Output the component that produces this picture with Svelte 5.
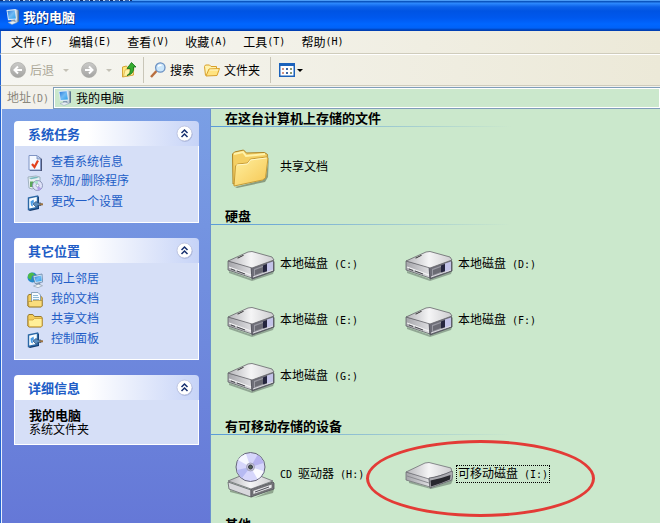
<script lang="ts">
type Item = { label: string; icon: string; selected?: boolean };
type Group = { title: string; items: Item[] };

const menus = ["文件(F)", "编辑(E)", "查看(V)", "收藏(A)", "工具(T)", "帮助(H)"];

const panels = [
	{
		title: "系统任务",
		links: [
			{ label: "查看系统信息", icon: "info" },
			{ label: "添加/删除程序", icon: "programs" },
			{ label: "更改一个设置", icon: "settings" },
		],
	},
	{
		title: "其它位置",
		links: [
			{ label: "网上邻居", icon: "network" },
			{ label: "我的文档", icon: "documents" },
			{ label: "共享文档", icon: "shared" },
			{ label: "控制面板", icon: "settings" },
		],
	},
];

const groups: Group[] = [
	{
		title: "在这台计算机上存储的文件",
		items: [{ label: "共享文档", icon: "folder" }],
	},
	{
		title: "硬盘",
		items: ["C", "D", "E", "F", "G"].map((letter) => ({
			label: `本地磁盘 (${letter}:)`,
			icon: "disk",
		})),
	},
	{
		title: "有可移动存储的设备",
		items: [
			{ label: "CD 驱动器 (H:)", icon: "cd" },
			{ label: "可移动磁盘 (I:)", icon: "removable", selected: true },
		],
	},
	{ title: "其他", items: [] },
];

let address = $state("我的电脑");
let closed = $state<Record<string, boolean>>({});

function toggle(title: string) {
	closed[title] = !closed[title];
}

// splits a label into CJK and ASCII runs, odd entries are ASCII
function runs(text: string) {
	return text.split(/([ -~]+)/);
}
</script>

{#snippet mixed(text: string)}
  {#each runs(text) as run, i}{#if i % 2}<span class="latin">{run}</span>{:else}{run}{/if}{/each}
{/snippet}

{#snippet computer()}
  <svg width="16" height="16" viewBox="0 0 16 16" aria-hidden="true">
    <path d="M10 0l3 1v12l-3 1z" fill="#c3ced8" />
    <path d="M12.5 1L14 1.5v11l-1.5 1z" fill="#5c7590" />
    <path d="M1.5 1L10.500 0l1.500 10.500-9 .8z" fill="#dceaf6" />
    <path d="M2.500 2L9.700 1.200l1.200 8.200-7.200.6z" fill="url(#screen)" />
    <path d="M6 11h4l.5 2H6.500z" fill="#8296ad" />
    <path d="M3 13.500l5-1.500 4 1.500-5 2z" fill="#e6edf2" stroke="#8ea2b8" stroke-width=".5" />
  </svg>
{/snippet}

{#snippet smallFolder()}
  <svg width="16" height="16" viewBox="0 0 16 16" aria-hidden="true">
    <path d="M1.500 13.500l-1-9 1-1.500h4l1.500 1.500h5.500v3" fill="#fff3ad" stroke="#d9a02b" />
    <path d="M2 14l3-7 10.500-.5-2.500 7z" fill="#ffe380" stroke="#d9a02b" />
    <path d="M5.700 8h8.500" stroke="#fff8cc" />
  </svg>
{/snippet}

{#snippet chevrons()}
  <svg width="17" height="17" viewBox="0 0 17 17" aria-hidden="true">
    <circle cx="9" cy="9.3" r="7.5" fill="#8a97c4" opacity=".6" />
    <circle cx="8.5" cy="8.5" r="7.5" fill="#fff" stroke="#b5bddb" stroke-width=".8" />
    <path d="M5.500 8L8.500 5l3 3M5.500 12l3-3 3 3" fill="none" stroke="#17306f" stroke-width="1.500" />
  </svg>
{/snippet}

{#snippet taskIcon(name: string)}
  <svg class="task-icon" width="16" height="16" viewBox="0 0 16 16" aria-hidden="true">
    {#if name === "info"}
      <path d="M3 1h8l4 3v12H3z" fill="#4a5578" />
      <path d="M2 .5h8l3.500 3.500v11H2z" fill="#f4f8ff" stroke="#7f94c4" />
      <path d="M10 .5v3.500h3.500" fill="#bfd0f0" stroke="#6d83b4" stroke-width=".8" />
      <path d="M5 9l2.500 3L11 5.500" fill="none" stroke="#e2401c" stroke-width="2.200" />
    {:else if name === "programs"}
      <path d="M1 2l8-1 4 1v9l-8 3-3-1z" fill="#e8eff2" stroke="#8fa5b2" stroke-width=".8" />
      <path d="M2 3l7-1.200 3 1-8 1.500z" fill="#73b7bd" />
      <path d="M3 6.500h3.500V12H3z" fill="#5da75b" />
      <circle cx="10.500" cy="10.500" r="5" fill="#dfe3f8" stroke="#7c86ab" stroke-width=".8" />
      <path d="M10.500 10.500L7 7a5 5 0 0 1 4-1z" fill="#a9e2c9" />
      <path d="M10.500 10.500l4 3a5 5 0 0 1-4 2z" fill="#b3a1eb" />
      <circle cx="10.500" cy="10.500" r="1.500" fill="#fff" stroke="#8893b7" stroke-width=".7" />
    {:else if name === "settings"}
      <path d="M2 3l9-2 1 1v12l-9 2-2-1z" fill="#143c70" />
      <path d="M1.500 3l9-2v11.500l-9 2z" fill="#f7fcff" stroke="#2b68a6" stroke-width="1.400" />
      <path d="M3.500 6.500l3-2 .500 3-1.500 1 .5 3-2-1z" fill="#4a9be4" />
      <path d="M6 9l3-2.500 2 1.500h3v2.500h-3L9 12z" fill="#5d8dbd" stroke="#264b72" stroke-width=".7" />
      <path d="M12.500 9.300H16" stroke="#9d7443" stroke-width="2" />
    {:else if name === "network"}
      <circle cx="5.500" cy="5.500" r="5" fill="#268aca" />
      <path d="M1 4c0-2 2-4 5-3l2 2-3 1-1 4-3-2z" fill="#4cba49" />
      <path d="M6 4l9-2 .7 8L8 11.500z" fill="#e0edf7" stroke="#56779c" stroke-width=".7" />
      <path d="M7.300 5l7-1.600.4 5.600-6 1z" fill="url(#screen)" />
      <path d="M9 11.500l4-.8.500 2H9z" fill="#7992ad" />
      <path d="M6.500 14l5-1.800 4 1.500-4.500 2z" fill="#f0f3f5" stroke="#8596a7" stroke-width=".6" />
    {:else}
      <path d="M.8 14V4l1-1.500h4L7.500 4.500H14l1.200 1V14l-1 1H2z" fill="#f4cd5c" stroke="#8f6f22" stroke-width=".9" />
      {#if name === "documents"}
        <path d="M4.500.5H11l2.500 2.500v8h-9z" fill="#f7fbff" stroke="#7592ad" stroke-width=".8" />
        <path d="M6 3.500h5M6 5.500h6M6 7.500h6" stroke="#73aaca" stroke-width=".8" />
        <path d="M1.300 9.500H5l1-1h9V14l-1 .7H2z" fill="#fbdd7c" stroke="#a58128" stroke-width=".6" />
      {:else}
        <path d="M1.300 8H6l1.500-1.500H15V14l-1 .7H2z" fill="#ffef99" stroke="#ca9b31" stroke-width=".7" />
      {/if}
    {/if}
  </svg>
{/snippet}

{#snippet bigIcon(name: string)}
  <svg width="48" height="48" viewBox="0 0 48 48" aria-hidden="true">
    {#if name === "folder"}
      <path d="M8 45l28-7 3-4 3-21-1 22-3 5-28 6z" fill="#5f6a4c" opacity=".6" />
      <path d="M6 42l-.5-30 2-2 9-2 3 3 18-.5 3 2-3 23z" fill="#f4cf63" stroke="#ad8528" />
      <path d="M7 12l9-2 3 4 19-2" fill="none" stroke="#fff3aa" stroke-width="2" />
      <path d="M7 44L8.500 24l2-2 10-1 3-4 16-2 1.500 1-2.500 20-3 2z" fill="url(#folder-face)" stroke="#c69a34" />
      <path d="M9.500 23l11-1 3-4 16-2" fill="none" stroke="#fff8c8" />
    {:else if name === "disk"}
      <path d="M2 31l23 8 22-8-1 3-21 7L2 33z" fill="#58665b" opacity=".5" />
      <path d="M1 21l24 6v11L1 30z" fill="url(#drive-side)" stroke="#626269" stroke-width=".8" />
      <path d="M24 27l22-7 1 2v9l-22 8z" fill="#6e6e78" stroke="#4a4a54" stroke-width=".8" />
      <path d="M1 21l20-9 4-.5L45 17l2 3-22 8z" fill="url(#drive-top)" stroke="#66666b" stroke-width=".8" />
      <path d="M10 18l6-3 1 .5-6 3z" fill="#333" />
      <path d="M2 27l22 8" stroke="#f4f4f5" stroke-width="1.200" />
      <path d="M4 29l4 1.500M10 31l8 3" stroke="#47474d" />
      <path d="M27 29l10-3.500V33l-10 3.500z" fill="#9a9aa3" />
      <path d="M28 30l8-3v5l-8 3z" fill="#6b6b74" />
      <path d="M36 25.500l4-1.500v7l-4 1.500z" fill="#25253e" />
      <path d="M40 23.500l6-2v9l-6 2z" fill="#c3c3e8" />
      <path d="M26 37l20-7" stroke="#dfdfe3" />
    {:else if name === "cd"}
      <path d="M3 40l24 8 20-9-1 4-19 5L3 42z" fill="#53624f" opacity=".5" />
      <path d="M1 32l23 8v7L2 39z" fill="#d8d8dc" stroke="#606066" stroke-width=".8" />
      <path d="M24 39l22-7 1 1v6l-23 8z" fill="#78787f" stroke="#505055" stroke-width=".8" />
      <path d="M1 31l17-7h10l18 7-22 8z" fill="url(#drive-top)" stroke="#6a6a70" stroke-width=".8" />
      <path d="M26 40.500l19-6.500v4l-19 6.500z" fill="#e8e8ec" stroke="#555" stroke-width=".6" />
      <path d="M28 42l14-5" stroke="#505058" />
      <circle cx="23.500" cy="17" r="14.500" fill="#d6d6fb" stroke="#66667a" />
      <path d="M23.500 17L11 10a14 14 0 0 1 8-6z" fill="#f5f7ff" />
      <path d="M23.500 17L10 20a14 14 0 0 0 5 8z" fill="#b6baf2" />
      <path d="M23.500 17l7-12a14 14 0 0 1 6 8z" fill="#b8b4f0" />
      <path d="M23.500 17l13 4a14 14 0 0 1-6 8z" fill="#fafaff" />
      <circle cx="23.500" cy="17" r="4" fill="#c5c5da" stroke="#9494ac" stroke-width=".7" />
      <circle cx="23.500" cy="17" r="2" fill="#526251" stroke="#39394a" />
    {:else}
      <path d="M4 31l22 7 22-8-2 4-20 5L4 33z" fill="#58665b" opacity=".5" />
      <path d="M1 22l23 6 1 9L1 30z" fill="url(#drive-side)" stroke="#707076" stroke-width=".8" />
      <path d="M1 22l19-9 4-.5L46 18l1 4-23 7z" fill="url(#drive-top)" stroke="#707076" stroke-width=".8" />
      <path d="M24 28q10-1 23-7l1 2-1 7-22 8z" fill="#aaaab0" stroke="#5a5a62" stroke-width=".8" />
      <path d="M25.500 30.500q9-1.500 20-5.500l-.5 4.500q-9 4-19 7z" fill="#28282e" />
      <path d="M2 26l22 7" stroke="#8b8b91" />
    {/if}
  </svg>
{/snippet}

<svg class="defs" width="0" height="0" aria-hidden="true">
  <defs>
    <linearGradient id="screen" x1="0" y1="0" x2="1" y2="1">
      <stop offset="0" stop-color="#2878da" />
      <stop offset=".5" stop-color="#71baf4" />
      <stop offset="1" stop-color="#2aa0eb" />
    </linearGradient>
    <linearGradient id="folder-face" x1="0" y1="0" x2="1" y2="1">
      <stop offset="0" stop-color="#fff0a0" />
      <stop offset="1" stop-color="#f6c753" />
    </linearGradient>
    <linearGradient id="drive-top" x1="0" y1="0" x2="1" y2="0">
      <stop offset="0" stop-color="#b5b5b9" />
      <stop offset=".5" stop-color="#f5f5f6" />
      <stop offset="1" stop-color="#cdcdd0" />
    </linearGradient>
    <linearGradient id="drive-side" x1="0" y1="0" x2="1" y2="0">
      <stop offset="0" stop-color="#a5a5aa" />
      <stop offset="1" stop-color="#dfdfe2" />
    </linearGradient>
    <linearGradient id="round-grey" x1="0" y1="0" x2="0" y2="1">
      <stop offset="0" stop-color="#cbcbc9" />
      <stop offset="1" stop-color="#a3a3a1" />
    </linearGradient>
  </defs>
</svg>

<div class="window">
  <header class="title-bar">
    {@render computer()}
    <h1>我的电脑</h1>
  </header>

  <nav class="menu-bar">
    {#each menus as menu}
      <button type="button">{@render mixed(menu)}</button>
    {/each}
  </nav>

  <div class="toolbar">
    <button type="button" class="tool back" disabled>
      <svg width="16" height="16" viewBox="0 0 16 16" aria-hidden="true">
        <circle cx="8" cy="8" r="7.5" fill="url(#round-grey)" stroke="#aaaaa6" stroke-width=".7" />
        <path d="M12 8H5M8 4.500L4.500 8 8 11.500" fill="none" stroke="#fff" stroke-width="2" />
      </svg>
      后退
    </button>
    <span class="arrow pale"></span>
    <button type="button" class="tool forward" aria-label="前进" disabled>
      <svg width="16" height="16" viewBox="0 0 16 16" aria-hidden="true">
        <circle cx="8" cy="8" r="7.5" fill="url(#round-grey)" stroke="#aaaaa6" stroke-width=".7" />
        <path d="M4 8h7M8 4.500l3.500 3.500L8 11.500" fill="none" stroke="#fff" stroke-width="2" />
      </svg>
    </button>
    <span class="arrow pale"></span>
    <button type="button" class="tool up" aria-label="向上">
      <svg width="16" height="16" viewBox="0 0 16 16" aria-hidden="true">
        <path d="M1.500 15V5l4-1 1 1.500 6-1V13z" fill="#ffe67b" stroke="#d6a437" />
        <path d="M2.500 14.500L4 8l9-2-1 7z" fill="#fff3a5" stroke="#d2a33c" stroke-width=".6" />
        <path d="M6 13.500q4-2 3-7H6L10.500.5 15 5h-2.500q1 7-6.500 8.500z" fill="#35ad2f" stroke="#136f17" stroke-width=".8" />
      </svg>
    </button>
    <span class="separator"></span>
    <button type="button" class="tool">
      <svg width="16" height="16" viewBox="0 0 16 16" aria-hidden="true">
        <path d="M1 15l5.500-6" stroke="#b86e3e" stroke-width="2.5" />
        <circle cx="10.3" cy="5.5" r="4.7" fill="#cce7fb" stroke="#6b91c2" stroke-width="1.3" />
        <path d="M8 4.500q1.500-2 3.500-1" fill="none" stroke="#fff" stroke-width="1.5" />
      </svg>
      搜索
    </button>
    <button type="button" class="tool folders">
      {@render smallFolder()}
      文件夹
    </button>
    <span class="separator"></span>
    <button type="button" class="tool views" aria-label="查看">
      <svg width="16" height="16" viewBox="0 0 16 16" aria-hidden="true">
        <rect x=".75" y="1.75" width="14.5" height="12.5" fill="#fff" stroke="#1b62bb" stroke-width="1.5" />
        <path d="M0 2.500h16" stroke="#1b62bb" stroke-width="3" />
        <path d="M3 7h2M3 11h2" stroke="#d29586" stroke-width="2" />
        <path d="M7 7h2M7 11h2" stroke="#3b67a5" stroke-width="2" />
        <path d="M11 7h2M11 11h2" stroke="#8b9a78" stroke-width="2" />
      </svg>
      <span class="arrow"></span>
    </button>
  </div>

  <div class="address-bar">
    <label for="address">{@render mixed("地址(D)")}</label>
    <div class="address-field">
      {@render computer()}
      <input id="address" type="text" bind:value={address} />
    </div>
  </div>

  <div class="content">
    <aside>
      {#each panels as panel}
        <section class="panel">
          <div class="panel-head">
            <h2>{panel.title}</h2>
            <button type="button" aria-label={panel.title} onclick={() => toggle(panel.title)}>
              {@render chevrons()}
            </button>
          </div>
          {#if !closed[panel.title]}
            <ul class="panel-body">
              {#each panel.links as link}
                <li>
                  <a href="#{link.icon}">
                    {@render taskIcon(link.icon)}
                    <span>{@render mixed(link.label)}</span>
                  </a>
                </li>
              {/each}
            </ul>
          {/if}
        </section>
      {/each}

      <section class="panel">
        <div class="panel-head">
          <h2>详细信息</h2>
          <button type="button" aria-label="详细信息" onclick={() => toggle("详细信息")}>
            {@render chevrons()}
          </button>
        </div>
        {#if !closed["详细信息"]}
          <div class="panel-body details">
            <strong>我的电脑</strong>
            <p>系统文件夹</p>
          </div>
        {/if}
      </section>
    </aside>

    <main>
      {#each groups as group}
        <section class="group">
          <h2>{group.title}</h2>
          <div class="items">
            {#each group.items as item}
              <button type="button" class="item" class:selected={item.selected}>
                {@render bigIcon(item.icon)}
                <span class="name">{@render mixed(item.label)}</span>
                {#if item.selected}
                  <span class="ring"></span>
                {/if}
              </button>
            {/each}
          </div>
        </section>
      {/each}
    </main>
  </div>
</div>

<style>
  :global(body) {
    margin: 0;
    overflow: hidden;
  }

  .defs {
    position: absolute;
  }

  .window {
    display: flex;
    flex-direction: column;
    height: 100vh;
    overflow: hidden;
    font-family: "Noto Sans CJK SC", sans-serif;
    font-size: 12px;
    line-height: 16px;
    color: #000;
    background: #cbe8cc;
  }

  svg {
    display: block;
    flex: none;
  }

  h1,
  h2,
  p,
  ul {
    margin: 0;
    padding: 0;
  }

  button {
    margin: 0;
    padding: 0;
    border: 0;
    background: none;
    font: inherit;
    color: inherit;
    white-space: nowrap;
  }

  .latin {
    font-family: "DejaVu Sans Mono", monospace;
    font-size: 10px;
    white-space: pre;
  }

  .title-bar {
    display: flex;
    align-items: center;
    gap: 2px;
    box-sizing: border-box;
    height: 31px;
    padding: 2px 5px 0;
    background:
      repeating-linear-gradient(90deg, #14316f 0 3px, #b9d4f2 3px 5px, #3265b0 5px 9px, #dce9f7 9px 10px)
        0 0 / 132px 1px no-repeat,
      linear-gradient(
        #4a9bf5 0 1px,
        #0a55c0 1px 2px,
        #2f8cff 3px,
        #0a60e8 7px,
        #0054e3 11px,
        #0058ee 18px,
        #0066ff 24px,
        #0062f8 28px,
        #003fb4 30px
      );
  }

  .title-bar h1 {
    font-size: 13px;
    line-height: 16px;
    color: #fff;
    text-shadow: 1px 1px #0b2f80;
  }

  .menu-bar {
    display: flex;
    align-items: center;
    gap: 16px;
    box-sizing: border-box;
    height: 23px;
    padding-left: 10px;
    border-left: 1px solid #2565d0;
    border-bottom: 1px solid #cfccbc;
    background: linear-gradient(90deg, #f7f7f4, #ece9d8);
  }

  .menu-bar button,
  .tool {
    display: flex;
    align-items: center;
  }

  .toolbar {
    display: flex;
    align-items: center;
    box-sizing: border-box;
    height: 32px;
    padding-left: 9px;
    border-left: 1px solid #2565d0;
    border-top: 1px solid #fff;
    border-bottom: 1px solid #cfccbc;
    background: linear-gradient(90deg, #f6f6f2, #ece9d8);
  }

  .tool {
    gap: 4px;
  }

  .back {
    color: #aca899;
  }

  .back,
  .forward {
    margin-right: 9px;
  }

  .forward {
    margin-left: 12px;
  }

  .up {
    margin: 0 6px 0 9px;
  }

  .arrow {
    border: 3px solid transparent;
    border-top-color: #000;
    border-bottom: 0;
  }

  .pale {
    border-top-color: #c4c1b6;
  }

  .separator {
    width: 1px;
    height: 26px;
    margin-right: 6px;
    background: #c9c6b8;
  }

  .folders {
    margin: 0 10px;
  }

  .views {
    gap: 2px;
    margin-left: 2px;
  }

  .address-bar {
    display: flex;
    align-items: center;
    box-sizing: border-box;
    height: 23px;
    padding-top: 1px;
    border-left: 1px solid #2565d0;
    background: #f2f1eb;
  }

  .address-bar label {
    width: 46px;
    padding-left: 6px;
    color: #8a877c;
    white-space: nowrap;
  }

  .address-field {
    display: flex;
    flex: 1;
    align-items: center;
    gap: 3px;
    box-sizing: border-box;
    height: 22px;
    padding-left: 3px;
    border: 1px solid #7f9db9;
    border-right: 0;
    background: #cbe8cc;
    box-shadow: inset 0 0 0 1px #fff;
  }

  .address-field input {
    flex: 1;
    min-width: 0;
    padding: 0;
    border: 0;
    background: none;
    font: inherit;
    color: inherit;
    outline: none;
  }

  .content {
    display: flex;
    flex: 1;
    min-height: 0;
  }

  aside {
    flex: none;
    display: flex;
    flex-direction: column;
    gap: 15px;
    box-sizing: border-box;
    width: 211px;
    padding: 12px 11px 0 13px;
    border-left: 1px solid #2565d0;
    border-right: 1px solid #6c93cf;
    box-shadow: inset 1px 0 #e8effc;
    background: linear-gradient(#7a9fe5, #6578d7);
  }

  .panel-head {
    display: flex;
    align-items: center;
    justify-content: space-between;
    height: 25px;
    padding: 0 6px 0 14px;
    border-radius: 4px 4px 0 0;
    background: linear-gradient(90deg, #fff 40%, #c6d3f7);
  }

  .panel-head h2 {
    font-size: 13px;
    line-height: 16px;
    color: #215dc6;
  }

  .panel-body {
    padding: 5px 12px 11px;
    border: 1px solid #fff;
    border-top: 0;
    background: #d6dff7;
    list-style: none;
  }

  .panel-body a {
    display: flex;
    align-items: center;
    gap: 8px;
    height: 20px;
    color: #215dc6;
    text-decoration: none;
  }

  .task-icon {
    margin-top: 3px;
  }

  .details {
    padding: 8px 14px;
    line-height: 14px;
  }

  .details strong {
    display: block;
    font-size: 13px;
  }

  main {
    flex: 1;
    min-width: 0;
    overflow: hidden;
  }

  .group h2 {
    display: flex;
    align-items: flex-end;
    box-sizing: border-box;
    height: 31px;
    padding: 0 0 1px 14px;
    font-size: 13px;
    line-height: 16px;
    background: linear-gradient(90deg, #5a9bd8, #cbe8cc) 0 100% / 300px 1px no-repeat;
  }

  .group:first-child h2 {
    height: 18px;
  }

  .items {
    display: grid;
    grid-template-columns: repeat(auto-fill, 178px);
    grid-auto-rows: 56px;
    padding: 11px 0 0 16px;
  }

  .item {
    display: flex;
    align-items: center;
    gap: 4px;
    text-align: left;
  }

  .name {
    padding: 0 1px;
    line-height: 14px;
  }

  .selected {
    position: relative;
  }

  .selected .name {
    outline: 1px dotted #000;
  }

  /* hand-drawn mark around the removable drive */
  .ring {
    position: absolute;
    top: -6px;
    left: -39px;
    box-sizing: border-box;
    width: 229px;
    height: 77px;
    border: 3px solid #e33b36;
    border-radius: 50%;
    pointer-events: none;
  }
</style>
